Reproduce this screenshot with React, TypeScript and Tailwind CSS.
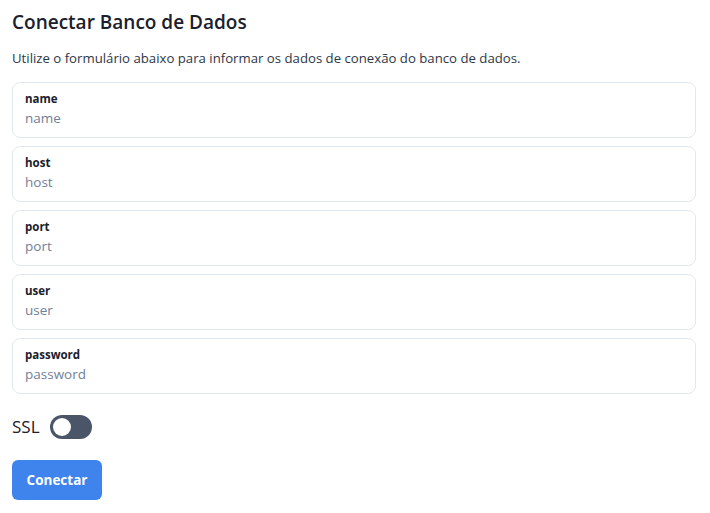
import React from "react";

const fields = ["name", "host", "port", "user", "password"];

export default function App() {
  return (
    <div
      className="min-h-[513px] bg-white pl-3 pr-[14px] pt-[9px] text-[#1a202c]"
      style={{ fontFamily: '"Open Sans", "Noto Sans", sans-serif' }}
    >
      <h1 className="text-[19px] font-semibold leading-[26px] text-[#1a202c]">Conectar Banco de Dados</h1>
      <p className="mt-[13px] text-[13.2px] leading-[20px] text-[#2d3748]">
        Utilize o formulário abaixo para informar os dados de conexão do banco de dados.
      </p>
      <div className="mt-[14px] flex flex-col gap-2">
        {fields.map((f) => (
          <div key={f} className="h-[56px] rounded-lg border border-[#e2e8f0] px-3 pt-[8px]">
            <div className="text-[11.5px] font-bold leading-[16px] text-[#1a202c]">{f}</div>
            <input
              placeholder={f}
              className="mt-[1px] block h-[20px] w-full bg-transparent text-[13.5px] leading-[20px] text-[#1a202c] outline-none placeholder:text-[#718096]"
            />
          </div>
        ))}
      </div>
      <div className="mt-[21px] flex items-center gap-[10px]">
        <span className="text-[17px] leading-[22px] text-[#1a202c]">SSL</span>
        <div className="flex h-[24px] w-[42px] items-center rounded-full bg-[#4a5568] px-[3px]">
          <div className="h-[18px] w-[18px] rounded-full bg-white" />
        </div>
      </div>
      <button className="mt-[21px] flex h-[40px] w-[90px] items-center justify-center rounded-md bg-[#3f83ec] text-[13.5px] font-bold text-white">
        Conectar
      </button>
    </div>
  );
}
